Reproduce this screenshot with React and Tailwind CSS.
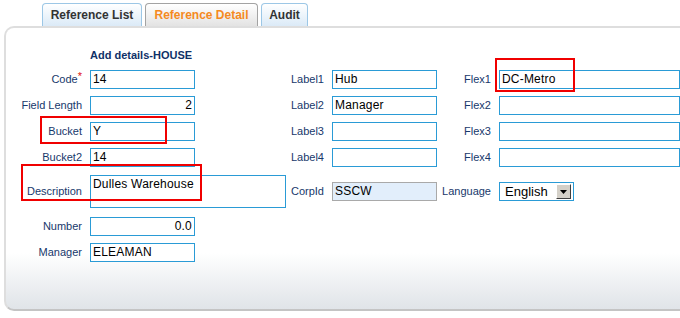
import React from "react";

const labelCls = "text-right text-[11px] leading-[13px] text-[#17386b] shrink-0";
const inputCls =
  "h-[19px] border border-[#2a9bd6] bg-white px-[2px] text-[12px] tracking-[0.2px] leading-[17px] text-black shrink-0 overflow-hidden whitespace-nowrap";

function Field({ value = "", right = false, w = "w-[105px]" }) {
  return (
    <div className={`${inputCls} ${w} ml-[8px] ${right ? "text-right" : ""}`}>{value}</div>
  );
}

function Row({ l1, v1, r1, l2, v2, l3, v3 }) {
  return (
    <div className="flex items-center h-[19px]">
      <div className={`${labelCls} w-[76px]`}>{l1}</div>
      <Field value={v1} right={r1} />
      {l2 !== undefined && (
        <>
          <div className={`${labelCls} w-[129px]`}>{l2}</div>
          <Field value={v2} />
          <div className={`${labelCls} w-[54px]`}>{l3}</div>
          <Field value={v3} w="w-[181px]" />
        </>
      )}
    </div>
  );
}

export default function App() {
  return (
    <div className="relative w-[680px] h-[318px] overflow-hidden bg-white font-['Liberation_Sans',Arial,sans-serif]">
      {/* Tabs */}
      <div className="flex gap-[3px] pl-[42px] pt-[3px] h-[26px] items-end">
        <div className="h-[23px] w-[100px] flex items-center justify-center rounded-t-[4px] border border-b-0 border-[#9cc7e6] bg-gradient-to-b from-white to-[#dbeaf7] text-[12px] font-bold text-[#333]">
          Reference List
        </div>
        <div className="h-[23px] w-[113px] flex items-center justify-center rounded-t-[4px] border border-b-0 border-[#a3a3a3] bg-gradient-to-b from-white to-[#e3e3e3] text-[12px] font-bold text-[#f58a1f]">
          Reference Detail
        </div>
        <div className="h-[23px] w-[47px] flex items-center justify-center rounded-t-[4px] border border-b-0 border-[#9cc7e6] bg-gradient-to-b from-white to-[#dbeaf7] text-[12px] font-bold text-[#333]">
          Audit
        </div>
      </div>

      {/* Panel */}
      <div className="ml-[4px] w-[690px] h-[285px] rounded-[10px] border-2 border-[#dedede] border-b-[#c4c4c4] bg-gradient-to-b from-white from-[80%] to-[#e0e4e8] pt-[21px]">
        <div className="ml-[84px] text-[11px] leading-[13px] font-bold text-[#0f3168]">Add details-HOUSE</div>
        <div className="mt-[8px] flex flex-col gap-[7px]">
          <div className="flex items-center h-[19px]">
            <div className={`${labelCls} w-[76px]`}>
              Code<span className="text-[#e01010] relative -top-[3px]">*</span>
            </div>
            <Field value="14" />
            <div className={`${labelCls} w-[129px]`}>Label1</div>
            <Field value="Hub" />
            <div className={`${labelCls} w-[54px]`}>Flex1</div>
            <Field value="DC-Metro" w="w-[181px]" />
          </div>
          <Row l1="Field Length" v1="2" r1 l2="Label2" v2="Manager" l3="Flex2" v3="" />
          <Row l1="Bucket" v1="Y" l2="Label3" v2="" l3="Flex3" v3="" />
          <Row l1="Bucket2" v1="14" l2="Label4" v2="" l3="Flex4" v3="" />

          {/* Description row */}
          <div className="flex items-center h-[33px] mt-px">
            <div className={`${labelCls} w-[76px]`}>Description</div>
            <div className="ml-[8px] w-[196px] h-[33px] border border-[#2a9bd6] bg-white px-[2px] pt-px text-[12px] tracking-[0.2px] leading-[14px] text-black shrink-0">
              Dulles Warehouse
            </div>
            <div className={`${labelCls} w-[38px]`}>CorpId</div>
            <div className="ml-[8px] w-[105px] h-[19px] border border-[#a9a9a9] bg-[#e2eefb] px-[2px] text-[12px] tracking-[0.2px] leading-[17px] text-black shrink-0">
              SSCW
            </div>
            <div className={`${labelCls} w-[54px]`}>Language</div>
            <div className="ml-[8px] w-[75px] h-[19px] border border-[#2a9bd6] bg-white flex items-center shrink-0">
              <span className="ml-[5px] text-[13px] leading-[15px] text-black">English</span>
              <div className="ml-auto mr-[2px] w-[15px] h-[15px] bg-[#d4d0c8] border border-t-white border-l-white border-r-[#404040] border-b-[#404040] flex items-center justify-center">
                <svg width="7" height="4" viewBox="0 0 7 4">
                  <path d="M0 0h7L3.5 4z" fill="#000" />
                </svg>
              </div>
            </div>
          </div>

          <div className="mt-[2px]">
            <Row l1="Number" v1="0.0" r1 />
          </div>
          <Row l1="Manager" v1="ELEAMAN" />
        </div>
      </div>

      {/* Red annotation boxes */}
      <div className="absolute left-[40px] top-[116px] w-[127px] h-[28px] border-2 border-[#f00000]" />
      <div className="absolute left-[21px] top-[164px] w-[181px] h-[37px] border-2 border-[#f00000]" />
      <div className="absolute left-[495px] top-[58px] w-[80px] h-[34px] border-2 border-[#f00000]" />
    </div>
  );
}
